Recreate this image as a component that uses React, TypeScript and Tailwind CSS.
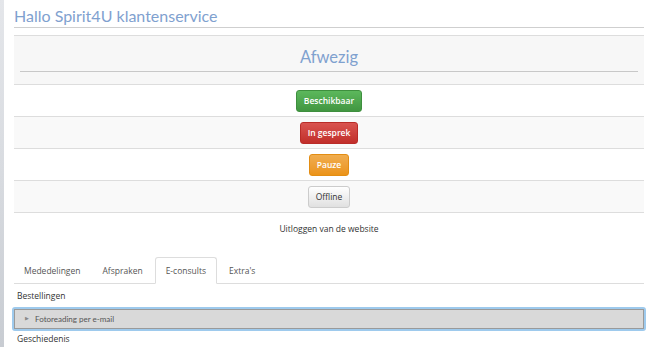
import React from "react";

const sans = { fontFamily: '"Open Sans", "Liberation Sans", sans-serif' };

export default function App() {
  return (
    <div className="flex h-[347px] w-[652px] overflow-hidden bg-white">
      <div className="w-[4px] h-full bg-gradient-to-b from-[#e4e6ea] via-[#d8dbe0] to-[#c8ccd2] shrink-0" />
      <div className="flex-1 pl-[10px] pr-[8px]">
        <div
          className="h-[28px] pt-[6px] text-[16px] leading-[19px] text-[#7fa1cf] border-b border-[#cfcfcf]"
          style={{ fontFamily: '"Lato", "Noto Sans", sans-serif' }}
        >
          Hallo Spirit4U klantenservice
        </div>
        <div className="mt-[7px] border-t border-[#dddddd] bg-[#f7f7f7] px-[6px] pt-[11px] h-[49px]">
          <div
            className="text-center text-[16.5px] leading-[20px] text-[#7fa1cf] border-b border-[#c8c8c8] pb-[4px]"
            style={{ fontFamily: '"Lato", "Noto Sans", sans-serif' }}
          >
            Afwezig
          </div>
        </div>
        <div style={sans}>
          <Row bg="bg-white">
            <button className="h-[22px] px-[7px] rounded-[3px] border border-[#3e8f3e] bg-gradient-to-b from-[#5cb85c] to-[#419641] text-white text-[8.5px] font-semibold">
              Beschikbaar
            </button>
          </Row>
          <Row bg="bg-[#f9f9f9]">
            <button className="h-[22px] px-[7px] rounded-[3px] border border-[#b92c28] bg-gradient-to-b from-[#d9534f] to-[#c12e2a] text-white text-[8.5px] font-semibold">
              In gesprek
            </button>
          </Row>
          <Row bg="bg-white">
            <button className="h-[22px] px-[7px] rounded-[3px] border border-[#e38d13] bg-gradient-to-b from-[#f0ad4e] to-[#eb9316] text-white text-[8.5px] font-semibold">
              Pauze
            </button>
          </Row>
          <Row bg="bg-[#f9f9f9]">
            <button className="h-[22px] px-[7px] rounded-[3px] border border-[#cccccc] bg-gradient-to-b from-white to-[#e0e0e0] text-[#333] text-[8.5px]">
              Offline
            </button>
          </Row>
          <div className="border-t border-[#dddddd] h-[33px] flex items-start justify-center pt-[10px] text-[8.5px] leading-[12px] text-[#333]">
            Uitloggen van de website
          </div>
          <div className="mt-[12px] flex border-b border-[#dddddd] h-[27px] text-[8.5px] text-[#555]">
            <Tab>Mededelingen</Tab>
            <Tab>Afspraken</Tab>
            <div className="px-[10px] -mb-px bg-white border border-[#dddddd] border-b-white rounded-t-[3px] flex items-center pt-[2px] mr-[2px]">
              E-consults
            </div>
            <Tab>Extra's</Tab>
          </div>
          <div className="pl-[3px] pt-[6px] h-[23px] text-[8.5px] leading-[12px] text-[#333]">
            Bestellingen
          </div>
          <div className="mx-[-2px] rounded-[3px] border-2 border-[#9ecaed]">
            <div className="h-[20px] border border-[#9a9a9a] bg-[#d9d9d9] flex items-center pl-[10px]">
              <span className="text-[5px] text-[#888] mr-[6px]">▶</span>
              <span className="text-[8px] text-[#555]" style={{ fontFamily: '"Lato", "Noto Sans", sans-serif' }}>
                Fotoreading per e-mail
              </span>
            </div>
          </div>
          <div className="pl-[3px] pt-[2px] text-[8.5px] leading-[12px] text-[#333]">Geschiedenis</div>
        </div>
      </div>
    </div>
  );
}

function Row({ bg, children }: { bg: string; children: React.ReactNode }) {
  return (
    <div className={`border-t border-[#dddddd] h-[32px] flex items-start justify-center pt-[5px] ${bg}`}>
      {children}
    </div>
  );
}

function Tab({ children }: { children: React.ReactNode }) {
  return <div className="px-[10px] flex items-center pt-[2px] mr-[2px]">{children}</div>;
}
